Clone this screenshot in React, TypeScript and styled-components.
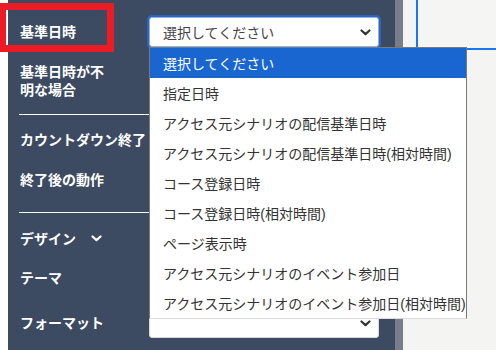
import styled, { createGlobalStyle } from 'styled-components';

const GlobalStyle = createGlobalStyle`
  html, body {
    margin: 0;
    padding: 0;
    background: #ffffff;
  }
  body {
    font-family: "Liberation Sans", "Noto Sans CJK JP", sans-serif;
  }
`;

const OPTIONS = [
  '選択してください',
  '指定日時',
  'アクセス元シナリオの配信基準日時',
  'アクセス元シナリオの配信基準日時(相対時間)',
  'コース登録日時',
  'コース登録日時(相対時間)',
  'ページ表示時',
  'アクセス元シナリオのイベント参加日',
  'アクセス元シナリオのイベント参加日(相対時間)',
];

const Chevron = ({ color = '#333' }: { color?: string }) => (
  <svg width="11" height="7" viewBox="0 0 11 7" fill="none">
    <path d="M1.5 1.5l4 3.6 4-3.6" stroke={color} strokeWidth="2.2" strokeLinecap="round" strokeLinejoin="round" />
  </svg>
);

export default function App() {
  return (
    <>
      <GlobalStyle />
      <Page>
        <Gutter />
        <Sidebar>
          <FocusFrame />
          <Row $top={17}>
            <Label>基準日時</Label>
            <Control>
              <Select $focused>
                <span>選択してください</span>
                <Chevron />
              </Select>
              <Menu>
                {OPTIONS.map((o, i) => (
                  <MenuItem key={o} $active={i === 0}>
                    {o}
                  </MenuItem>
                ))}
              </Menu>
            </Control>
          </Row>
          <Row $top={16} $height={36}>
            <Label>
              基準日時が不
              <br />
              明な場合
            </Label>
            <Control>
              <Select>
                <span />
                <Chevron />
              </Select>
            </Control>
          </Row>
          <Divider $top={15} />
          <Row $top={10}>
            <Label>カウントダウン終了</Label>
          </Row>
          <Row $top={10}>
            <Label>終了後の動作</Label>
          </Row>
          <Divider $top={17} />
          <Heading>
            デザイン
            <Chevron color="#ffffff" />
          </Heading>
          <Row $top={15}>
            <Label>テーマ</Label>
          </Row>
          <Row $top={15}>
            <Label>フォーマット</Label>
            <Control>
              <Select>
                <span />
                <Chevron />
              </Select>
            </Control>
          </Row>
        </Sidebar>
        <Scrollbar />
        <Main>
          <Preview />
        </Main>
      </Page>
    </>
  );
}

const Page = styled.div`
  display: flex;
  width: 496px;
  height: 350px;
  overflow: hidden;
  position: relative;
`;

const Gutter = styled.div`
  width: 8px;
  flex: none;
  background: #ffffff;
`;

const Sidebar = styled.div`
  width: 387px;
  flex: none;
  background: #3c4a62;
  padding-left: 12px;
  box-sizing: border-box;
  display: flex;
  flex-direction: column;
  position: relative;
`;

const FocusFrame = styled.div`
  position: absolute;
  left: -9px;
  top: 3px;
  width: 115px;
  height: 49px;
  border: 7px solid #ec1c24;
  box-sizing: border-box;
  z-index: 3;
  pointer-events: none;
`;

const Row = styled.div<{ $top: number; $height?: number }>`
  display: flex;
  align-items: center;
  margin-top: ${p => p.$top}px;
  height: ${p => p.$height ?? 30}px;
  flex: none;
`;

const Label = styled.div`
  width: 129px;
  flex: none;
  color: #ffffff;
  font-size: 14px;
  font-weight: 700;
  line-height: 18px;
  white-space: nowrap;
`;

const Control = styled.div`
  position: relative;
  width: 230px;
  height: 30px;
`;

const Select = styled.div<{ $focused?: boolean }>`
  display: flex;
  align-items: center;
  justify-content: space-between;
  box-sizing: border-box;
  height: 30px;
  padding: 0 7px 0 13px;
  background: #ffffff;
  border: 1px solid ${p => (p.$focused ? '#8ab4f0' : '#d8d8d8')};
  border-radius: 3px;
  box-shadow: ${p => (p.$focused ? '0 0 0 2px rgba(40, 110, 220, 0.75)' : 'none')};
  color: #444;
  font-size: 14px;
`;

const Menu = styled.div`
  position: absolute;
  left: 0;
  top: 30px;
  width: 318px;
  background: #ffffff;
  border: 1px solid #7a7a7a;
  border-bottom-color: #dcdcdc;
  box-sizing: border-box;
  z-index: 5;
`;

const MenuItem = styled.div<{ $active?: boolean }>`
  height: 30px;
  display: flex;
  align-items: center;
  padding-left: 13px;
  font-size: 14px;
  white-space: nowrap;
  color: ${p => (p.$active ? '#ffffff' : '#333333')};
  background: ${p => (p.$active ? '#1a66d0' : 'transparent')};
`;

const Divider = styled.div<{ $top: number }>`
  margin-top: ${p => p.$top}px;
  height: 1px;
  width: 360px;
  margin-left: -1px;
  background: #ffffff;
  flex: none;
`;

const Heading = styled.div`
  margin-top: 15px;
  height: 20px;
  display: flex;
  align-items: center;
  gap: 15px;
  color: #ffffff;
  font-size: 14px;
  font-weight: 700;
`;

const Scrollbar = styled.div`
  width: 8px;
  flex: none;
  background: #777d89;
`;

const Main = styled.div`
  flex: 1;
  background: #f4f4f2;
  padding-left: 13px;
`;

const Preview = styled.div`
  height: 48px;
  border-left: 2px solid #1877f2;
  border-bottom: 2px solid #1877f2;
  background: #f5f5f3;
`;
